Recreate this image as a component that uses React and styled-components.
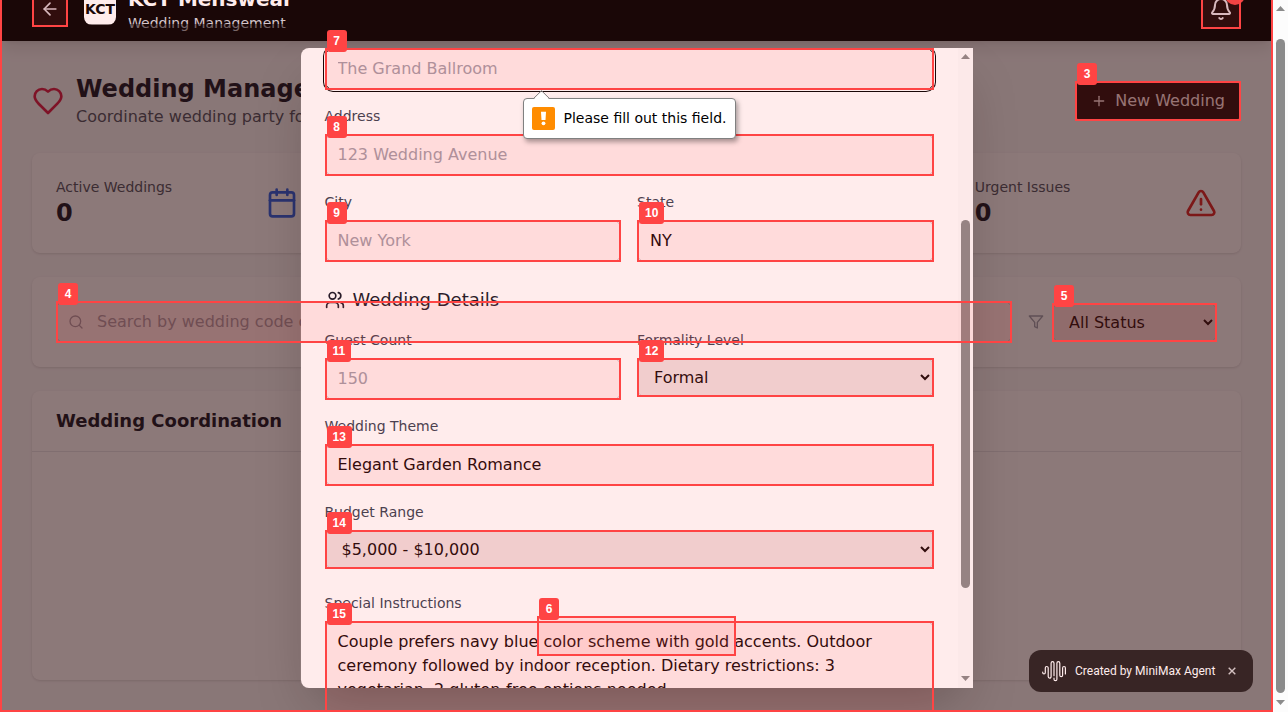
import React from "react";
import styled, { createGlobalStyle, css } from "styled-components";
import {
  ArrowLeft,
  Bell,
  Plus,
  Calendar,
  TriangleAlert,
  Search,
  Users,
} from "lucide-react";

const GlobalStyle = createGlobalStyle`
  *, *::before, *::after { box-sizing: border-box; }
  html, body { margin: 0; height: 100%; overflow: hidden; }
  body {
    font-family: "DejaVu Sans", sans-serif;
    font-size: 16px;
    line-height: 24px;
    color: #111827;
  }
  h1, h2, h3, p { margin: 0; }
  svg { display: block; flex-shrink: 0; }
`;

const Window = styled.div`
  display: flex;
  width: 1288px;
  height: 712px;
  overflow: hidden;
  position: relative;
`;

const Viewport = styled.div`
  position: relative;
  width: 1273px;
  height: 712px;
  overflow: hidden;
  background: #f9fafb;
`;

/* ---------- header ---------- */

const Header = styled.header`
  display: flex;
  align-items: center;
  justify-content: space-between;
  height: 64px;
  margin-top: -23px;
  padding: 0 32px;
  background: #000;
  color: #fff;
  box-shadow: 0 10px 15px -3px rgba(0, 0, 0, 0.1), 0 4px 6px -4px rgba(0, 0, 0, 0.1);
`;

const HeaderLeft = styled.div`
  display: flex;
  align-items: center;
  gap: 16px;
`;

const Brand = styled.div`
  display: flex;
  align-items: center;
  gap: 12px;
`;

const IconButton = styled.button`
  position: relative;
  padding: 8px;
  border: 0;
  border-radius: 8px;
  background: transparent;
  color: #d1d5db;
`;

const NotificationDot = styled.span`
  position: absolute;
  top: -4px;
  right: -4px;
  width: 20px;
  height: 20px;
  border-radius: 50%;
  background: #ef4444;
`;

const Logo = styled.div`
  display: flex;
  align-items: center;
  justify-content: center;
  width: 32px;
  height: 32px;
  border-radius: 8px;
  background: #fff;
  color: #000;
  font-size: 14px;
  font-weight: 700;
  line-height: 20px;
`;

const BrandName = styled.h1`
  font-size: 20px;
  font-weight: 700;
  line-height: 28px;
`;

const BrandSection = styled.p`
  font-size: 14px;
  line-height: 20px;
  color: #d1d5db;
`;

/* ---------- page ---------- */

const Main = styled.main`
  display: flex;
  flex-direction: column;
  gap: 24px;
  padding: 32px;
`;

const TitleBar = styled.div`
  display: flex;
  align-items: center;
  justify-content: space-between;
`;

const TitleGroup = styled.div`
  display: flex;
  align-items: center;
  gap: 12px;
  color: #111827;
`;

const PageTitle = styled.h2`
  font-size: 24px;
  font-weight: 700;
  line-height: 32px;
`;

const PageSubtitle = styled.p`
  color: #4b5563;
`;

const PrimaryButton = styled.button`
  display: flex;
  align-items: center;
  gap: 8px;
  height: 40px;
  padding: 0 16px;
  border: 0;
  border-radius: 8px;
  background: #000;
  color: #fff;
  font: inherit;
`;

const Stats = styled.div`
  display: grid;
  grid-template-columns: repeat(4, 1fr);
  gap: 16px;
`;

const Card = styled.section`
  border-radius: 8px;
  background: #fff;
  box-shadow: 0 1px 3px rgba(0, 0, 0, 0.1), 0 1px 2px -1px rgba(0, 0, 0, 0.1);
`;

const StatCard = styled(Card)`
  display: flex;
  align-items: center;
  justify-content: space-between;
  padding: 24px;
  svg { color: ${(p) => p.$accent}; }
`;

const StatLabel = styled.p`
  font-size: 14px;
  line-height: 20px;
  color: #4b5563;
`;

const StatValue = styled.p`
  font-size: 24px;
  font-weight: 700;
  line-height: 32px;
`;

const FilterCard = styled(Card)`
  display: flex;
  align-items: center;
  gap: 16px;
  padding: 24px;
`;

const controlStyle = css`
  width: ${(p) => p.$width || "100%"};
  border: 1px solid #d1d5db;
  border-radius: 8px;
  padding: 8px 12px;
  font: inherit;
  color: #000;
  outline: none;
`;

const Input = styled.input`
  ${controlStyle}
  display: block;
  height: 42px;
  padding: 7px 12px 9px;
  background: #fff;
  &::placeholder { color: #9ca3af; opacity: 1; }
  ${(p) =>
    p.$focused &&
    css`
      border-color: #000;
      box-shadow: 0 0 0 1px #fff, 0 0 0 2px #000;
    `}
`;

const Select = styled.select`
  ${controlStyle}
  display: block;
  height: 39px;
  background: #efefef;
`;

const TextArea = styled.textarea`
  ${controlStyle}
  display: block;
  height: 98px;
  background: #fff;
  resize: none;
  overflow: hidden;
`;

const SearchBox = styled.label`
  display: grid;
  grid-template-columns: 12px 16px 1fr;
  align-items: center;
  flex: 1;
  isolation: isolate;
  svg { grid-area: 1 / 2; z-index: 1; color: #9ca3af; }
  input { grid-area: 1 / 1 / 2 / 4; padding-left: 40px; }
`;

const StatusFilter = styled.div`
  display: flex;
  align-items: center;
  gap: 8px;
  color: #9ca3af;
`;

const ListCard = styled(Card)`
  height: 289px;
`;

const ListHeader = styled.div`
  padding: 16px 24px;
  border-bottom: 1px solid #e5e7eb;
  h3 { font-size: 18px; line-height: 28px; font-weight: 700; }
`;

/* ---------- icons ---------- */

const HeartIcon = () => (
  <svg width="32" height="32" viewBox="0 0 24 24" fill="none" stroke="#e11d48" strokeWidth="2" strokeLinecap="round" strokeLinejoin="round">
    <path d="M19 14c1.490-1.460 3-3.210 3-5.500A5.500 5.500 0 0 0 16.500 3c-1.760 0-3 .5-4.500 2-1.500-1.500-2.740-2-4.500-2A5.500 5.500 0 0 0 2 8.500c0 2.300 1.500 4.050 3 5.500l7 7Z" />
  </svg>
);

const FilterIcon = () => (
  <svg width="16" height="16" viewBox="0 0 24 24" fill="none" stroke="currentColor" strokeWidth="2" strokeLinecap="round" strokeLinejoin="round">
    <polygon points="22 3 2 3 10 12.460 10 19 14 21 14 12.460 22 3" />
  </svg>
);

/* ---------- dialog ---------- */

const Backdrop = styled.div`
  position: absolute;
  inset: 24px 0 0 0;
  display: flex;
  align-items: center;
  justify-content: center;
  background: rgba(0, 0, 0, 0.5);
`;

const Dialog = styled.div`
  display: flex;
  width: 672px;
  height: 640px;
  margin-left: 1px;
  border-radius: 8px 0 0 8px;
  overflow: hidden;
  background: #fff;
`;

const DialogShadow = styled.div`
  border-radius: 8px;
  box-shadow: 0 25px 50px -12px rgba(0, 0, 0, 0.25);
`;

const Form = styled.form`
  display: flex;
  flex-direction: column;
  gap: 24px;
  flex: 1;
  margin-left: -0.5px;
  padding: 0 24.5px 0 24px;
`;

const FieldGroup = styled.div`
  display: flex;
  flex-direction: column;
  gap: 16px;
`;

const FieldRow = styled.div`
  display: grid;
  grid-template-columns: 1fr 1fr;
  gap: 16px;
`;

const FieldLabel = styled.label`
  display: flex;
  flex-direction: column;
  gap: 8px;
  font-size: 14px;
  line-height: 20px;
  color: #374151;
  input, select, textarea { font-size: 16px; line-height: 24px; }
`;

const GroupTitle = styled.h3`
  display: flex;
  align-items: center;
  gap: 8px;
  font-size: 18px;
  font-weight: 400;
  line-height: 28px;
`;

/* ---------- scrollbars ---------- */

const Track = styled.div`
  display: flex;
  flex-direction: column;
  align-items: center;
  width: 15px;
  height: 100%;
  padding: 6px 0 7px;
  background: #fcfcfc;
`;

const Arrow = styled.span`
  width: 9px;
  height: 5px;
  background: #8b8b8b;
  clip-path: ${(p) =>
    p.$down ? "polygon(0 0, 100% 0, 50% 100%)" : "polygon(50% 0, 100% 100%, 0 100%)"};
`;

const Thumb = styled.span`
  width: 9px;
  height: ${(p) => p.$size}px;
  margin-top: ${(p) => p.$offset}px;
  margin-bottom: auto;
  border-radius: 5px;
  background: #8b8b8b;
`;

function ScrollBar({ offset, size }) {
  return (
    <Track>
      <Arrow />
      <Thumb $offset={offset} $size={size} />
      <Arrow $down />
    </Track>
  );
}

/* ---------- floating badge ---------- */

const AgentBadge = styled.div`
  position: absolute;
  right: 20px;
  bottom: 20px;
  display: flex;
  align-items: center;
  width: 224px;
  height: 42px;
  padding: 0 16px 0 12px;
  border-radius: 12px;
  background: #222;
  color: #fff;
  font-family: Roboto, sans-serif;
  font-size: 12px;
  line-height: 16px;
`;

const AgentText = styled.span`
  width: 140px;
  margin: 0 13px 0 8px;
  white-space: nowrap;
  font-weight: 400;
`;

const AgentLogo = () => (
  <svg width="26" height="22" viewBox="0 0 26 22" fill="none" stroke="currentColor" strokeWidth="1.200" strokeLinecap="round">
    <path d="M1.700 12.200v.2c0 2 2.600 2 2.600 0V8c0-2 2.900-2 2.900 0v8.600c0 2 2.900 2 2.900 0V3.200c0-2 2.900-2 2.900 0v12.500M13 18v1.200c0 2 2.900 2 2.900 0V3.200c0-2 2.900-2 2.900 0v12c0 2 2.800 2 2.800 0V8c0-2 2.800-2 2.800 0v6" />
  </svg>
);

const CloseIcon = () => (
  <svg width="8" height="8" viewBox="0 0 8 8" stroke="#d0d0d0" strokeWidth="1.400">
    <path d="M.7.7l6.600 6.600M7.300.7L.7 7.300" />
  </svg>
);

/* ---------- element markers ---------- */

const MarkerBox = styled.div`
  position: absolute;
  left: ${(p) => p.$x}px;
  top: ${(p) => p.$y}px;
  width: ${(p) => p.$w}px;
  height: ${(p) => p.$h}px;
  border: 2px solid #ff4444;
  background: rgba(255, 68, 68, 0.1);
`;

const MarkerLabel = styled.span`
  position: absolute;
  left: 0;
  top: -20px;
  min-width: 20px;
  padding: 4px 6px;
  border-radius: 3px;
  background: #ff4444;
  color: #fff;
  font: 700 12px/14px "Liberation Sans", sans-serif;
  text-align: center;
`;

const markers = [
  { x: 0, y: -40, w: 1273, h: 752 },
  { x: 32, y: -9, w: 36, h: 36 },
  { x: 1201, y: -11, w: 40, h: 40 },
  { n: 3, x: 1075, y: 81, w: 166, h: 40 },
  { n: 4, x: 56, y: 301, w: 956, h: 42 },
  { n: 5, x: 1052, y: 303, w: 165, h: 39 },
  { n: 6, x: 537, y: 616, w: 199, h: 40 },
  { n: 7, x: 324.5, y: 48, w: 609, h: 42 },
  { n: 8, x: 324.5, y: 134, w: 609, h: 42 },
  { n: 9, x: 324.5, y: 220, w: 296.5, h: 42 },
  { n: 10, x: 637, y: 220, w: 296.5, h: 42 },
  { n: 11, x: 324.5, y: 358, w: 296.5, h: 42 },
  { n: 12, x: 637, y: 358, w: 296.5, h: 39 },
  { n: 13, x: 324.5, y: 444, w: 609, h: 42 },
  { n: 14, x: 324.5, y: 530, w: 609, h: 39 },
  { n: 15, x: 324.5, y: 621, w: 609, h: 98 },
];

/* ---------- validation bubble ---------- */

const Bubble = styled.div`
  position: absolute;
  left: 523px;
  top: 98px;
  display: flex;
  align-items: center;
  gap: 8.5px;
  width: 213px;
  height: 41px;
  padding: 0 8px;
  border: 1px solid #808080;
  border-radius: 4px;
  background: #fff;
  box-shadow: 2px 3px 5px rgba(0, 0, 0, 0.35);
`;

const BubbleText = styled.span`
  padding-bottom: 2px;
  color: #000;
  font-size: 14px;
  line-height: 18px;
  white-space: nowrap;
`;

const BubbleTip = styled.svg`
  position: absolute;
  left: 9px;
  top: -9px;
`;

function Field({ label, children }) {
  return (
    <FieldLabel>
      {label}
      {children}
    </FieldLabel>
  );
}

export default function App() {
  return (
    <Window>
      <GlobalStyle />
      <Viewport>
        <Header>
          <HeaderLeft>
            <IconButton><ArrowLeft size={20} /></IconButton>
            <Brand>
              <Logo>KCT</Logo>
              <div>
                <BrandName>KCT Menswear</BrandName>
                <BrandSection>Wedding Management</BrandSection>
              </div>
            </Brand>
          </HeaderLeft>
          <IconButton>
            <Bell size={24} />
            <NotificationDot />
          </IconButton>
        </Header>

        <Main>
          <TitleBar>
            <TitleGroup>
              <HeartIcon />
              <div>
                <PageTitle>Wedding Management</PageTitle>
                <PageSubtitle>Coordinate wedding party for</PageSubtitle>
              </div>
            </TitleGroup>
            <PrimaryButton><Plus size={16} />New Wedding</PrimaryButton>
          </TitleBar>

          <Stats>
            <StatCard $accent="#2563eb">
              <div>
                <StatLabel>Active Weddings</StatLabel>
                <StatValue>0</StatValue>
              </div>
              <Calendar size={32} />
            </StatCard>
            <StatCard />
            <StatCard />
            <StatCard $accent="#dc2626">
              <div>
                <StatLabel>Urgent Issues</StatLabel>
                <StatValue>0</StatValue>
              </div>
              <TriangleAlert size={32} />
            </StatCard>
          </Stats>

          <FilterCard>
            <SearchBox>
              <Search size={16} />
              <Input placeholder="Search by wedding code or" />
            </SearchBox>
            <StatusFilter>
              <FilterIcon />
              <Select $width="165px">
                <option>All Status</option>
              </Select>
            </StatusFilter>
          </FilterCard>

          <ListCard>
            <ListHeader><h3>Wedding Coordination</h3></ListHeader>
          </ListCard>
        </Main>

        <Backdrop>
          <DialogShadow>
            <Dialog>
              <Form>
                <FieldGroup>
                  <Input $focused placeholder="The Grand Ballroom" />
                  <Field label="Address">
                    <Input placeholder="123 Wedding Avenue" />
                  </Field>
                  <FieldRow>
                    <Field label="City"><Input placeholder="New York" /></Field>
                    <Field label="State"><Input defaultValue="NY" /></Field>
                  </FieldRow>
                </FieldGroup>
                <FieldGroup>
                  <GroupTitle><Users size={20} />Wedding Details</GroupTitle>
                  <FieldRow>
                    <Field label="Guest Count"><Input placeholder="150" /></Field>
                    <Field label="Formality Level">
                      <Select><option>Formal</option></Select>
                    </Field>
                  </FieldRow>
                  <Field label="Wedding Theme">
                    <Input defaultValue="Elegant Garden Romance" />
                  </Field>
                  <Field label="Budget Range">
                    <Select><option>$5,000 - $10,000</option></Select>
                  </Field>
                </FieldGroup>
                <Field label="Special Instructions">
                  <TextArea defaultValue="Couple prefers navy blue color scheme with gold accents. Outdoor ceremony followed by indoor reception. Dietary restrictions: 3 vegetarian, 2 gluten-free options needed." />
                </Field>
              </Form>
              <ScrollBar offset={161} size={368} />
            </Dialog>
          </DialogShadow>
        </Backdrop>

        <AgentBadge>
          <AgentLogo />
          <AgentText>Created by MiniMax Agent</AgentText>
          <CloseIcon />
        </AgentBadge>

        {markers.map((m, i) => (
          <MarkerBox key={i} $x={m.x} $y={m.y} $w={m.w} $h={m.h}>
            {m.n && <MarkerLabel>{m.n}</MarkerLabel>}
          </MarkerBox>
        ))}

        <Bubble>
          <BubbleTip width="18" height="10" viewBox="0 0 18 10">
            <path d="M.5 9.500L8.500 1.500L16.500 9.500V10H.5Z" fill="#fff" />
            <path d="M.5 8.500L8.500.7L16.500 8.500" fill="none" stroke="#808080" />
          </BubbleTip>
          <svg width="23" height="23" viewBox="0 0 23 23">
            <rect width="23" height="23" rx="2" fill="#ff8c00" />
            <path d="M9 4.700h5l-.5 8.300h-4z" fill="#fff" />
            <circle cx="11.500" cy="16.300" r="1.900" fill="#fff" />
          </svg>
          <BubbleText>Please fill out this field.</BubbleText>
        </Bubble>
      </Viewport>
      <ScrollBar offset={28} size={654} />
    </Window>
  );
}
